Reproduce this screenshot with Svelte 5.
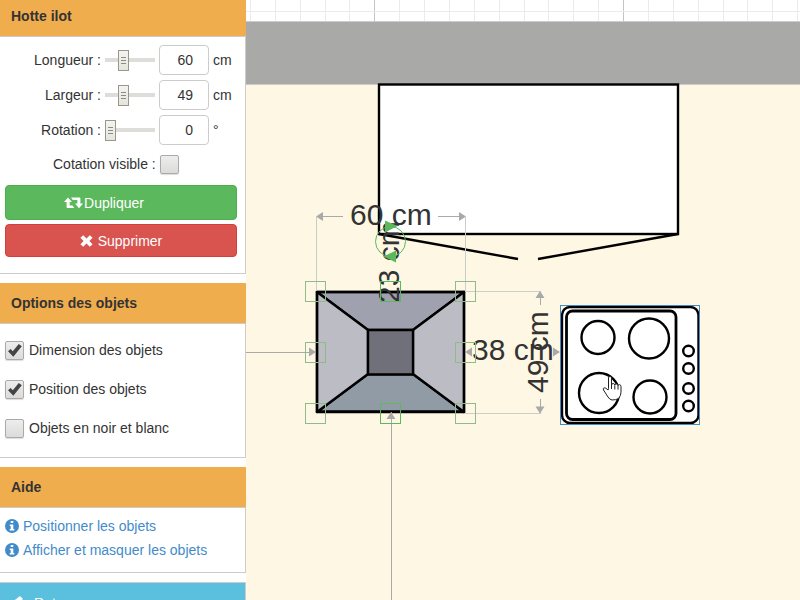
<script lang="ts">
	type Dimension = {
		id: string;
		label: string;
		value: number;
		max: number;
		unit: string;
	};

	type Option = {
		id: string;
		label: string;
		checked: boolean;
	};

	let dimensions = $state<Dimension[]>([
		{ id: 'longueur', label: 'Longueur :', value: 60, max: 180, unit: 'cm' },
		{ id: 'largeur', label: 'Largeur :', value: 49, max: 147, unit: 'cm' },
		{ id: 'rotation', label: 'Rotation :', value: 0, max: 360, unit: '°' }
	]);

	let options = $state<Option[]>([
		{ id: 'dimension', label: 'Dimension des objets', checked: true },
		{ id: 'position', label: 'Position des objets', checked: true },
		{ id: 'noir-blanc', label: 'Objets en noir et blanc', checked: false }
	]);

	let cotation = $state(false);

	const helpLinks = ['Positionner les objets', 'Afficher et masquer les objets'];

	// plan geometry, origin at the top left of the canvas
	const gridLines = Array.from({ length: 120 }, (_, i) => ({
		x: Math.floor(4.4 + i * 24.88) + 0.5,
		major: i % 10 === 5
	}));

	const handles = [
		{ x: 59, y: 281 },
		{ x: 134, y: 281, strong: true },
		{ x: 209, y: 281 },
		{ x: 59, y: 342 },
		{ x: 209, y: 342 },
		{ x: 59, y: 403 },
		{ x: 134, y: 403, strong: true },
		{ x: 209, y: 403 }
	];

	const burners = [
		{ x: 352, y: 337.5, r: 16.5 },
		{ x: 403, y: 338.5, r: 20 },
		{ x: 353, y: 393, r: 20 },
		{ x: 404, y: 397, r: 16.5 }
	];

	const knobs = [351, 368.5, 388.5, 406];
</script>

<div class="planner">
	<aside class="sidebar">
		<section class="panel">
			<h2 class="first">Hotte ilot</h2>
			<div class="body object">
				{#each dimensions as dim (dim.id)}
					<div class="dimension">
						<label for={dim.id}>{dim.label}</label>
						<input type="range" min="0" max={dim.max} bind:value={dim.value} aria-label={dim.label} />
						<input class="number" id={dim.id} type="number" bind:value={dim.value} />
						<span>{dim.unit}</span>
					</div>
				{/each}
				<div class="cotation">
					<label for="cotation">Cotation visible :</label>
					<input id="cotation" type="checkbox" bind:checked={cotation} />
				</div>
				<button class="btn duplicate" type="button">
					<svg width="19" height="14" viewBox="0 0 19 14" aria-hidden="true">
						<path d="M4 1.500 8 6H5.700v3.600H8.500l1.800 2.400H3.600c-.6 0-1-.4-1-1V6H0zM7 1.500h8.400c.6 0 1 .4 1 1V7.500H19l-4 4.800-4-4.800h2.400V4H8.800z" />
					</svg>
					<span>Dupliquer</span>
				</button>
				<button class="btn delete" type="button">
					<svg width="13" height="12" viewBox="0 0 13 12" aria-hidden="true">
						<path d="M3.2.2 6.5 3.4 9.8.2 12.6 2.8 9.4 6l3.2 3.2-2.8 2.6-3.3-3.2-3.3 3.2L.4 9.2 3.6 6 .4 2.8z" />
					</svg>
					<span>Supprimer</span>
				</button>
			</div>
		</section>

		<section class="panel">
			<h2>Options des objets</h2>
			<div class="body options">
				{#each options as option (option.id)}
					<label>
						<input type="checkbox" bind:checked={option.checked} />
						{option.label}
					</label>
				{/each}
			</div>
		</section>

		<section class="panel">
			<h2>Aide</h2>
			<div class="body help">
				{#each helpLinks as text (text)}
					<a href="#aide">
						<svg width="14" height="14" viewBox="0 0 14 14" aria-hidden="true">
							<circle cx="7" cy="7" r="7" fill="#428bca" />
							<path d="M5.7 2h2.6v2H5.7zM4.7 5.4h3.6V10h1v1.6H4.7V10h1V7h-1z" fill="#fff" />
						</svg>
						{text}
					</a>
				{/each}
			</div>
		</section>

		<button class="back" type="button">
			<svg width="14" height="14" viewBox="0 0 14 14" aria-hidden="true">
				<path d="M9 0 12 3 7 7l5 4-3 3-9-7z" />
			</svg>
			Retour
		</button>
	</aside>

	<main class="canvas">
		<svg width="100%" height="100%" role="img" aria-label="Plan">
			<rect width="100%" height="100%" fill="#fff" />
			{#each gridLines as line (line.x)}
				<line x1={line.x} x2={line.x} y1="0" y2="22" stroke={line.major ? '#c4c4c4' : '#ebebeb'} />
			{/each}
			<line x1="0" x2="100%" y1="11.5" y2="11.5" stroke="#ebebeb" />
			<rect y="84" width="100%" height="100%" fill="#fdf7e3" />
			<rect y="21" width="100%" height="64" fill="#ccc" />
			<rect y="22" width="100%" height="62" fill="#a9a9a7" />

			<!-- cupboard with its two doors -->
			<g stroke="#000" stroke-width="2.4">
				<rect x="133" y="84.5" width="299" height="149.5" fill="#fff" />
				<path d="M133 234 272 259M432 234 292 259" fill="none" />
			</g>

			<!-- hob -->
			<g stroke="#000" fill="#fff">
				<rect x="316" y="307" width="136.5" height="116" rx="8" stroke-width="2.4" />
				<rect x="320.5" y="311" width="109.5" height="108.5" rx="6" stroke-width="2.8" />
				{#each burners as b (b.x)}
					<circle cx={b.x} cy={b.y} r={b.r} stroke-width="2.4" />
				{/each}
				{#each knobs as y (y)}
					<circle cx="442.5" cy={y} r="5.3" stroke-width="2.4" />
				{/each}
			</g>
			<rect x="314.5" y="305.5" width="139" height="119" fill="none" stroke="#428bca" />

			<!-- island hood -->
			<g stroke="#000" stroke-width="2.4" stroke-linejoin="round">
				<path d="M71 292H218L167 330H122z" fill="#a0a1ae" />
				<path d="M71 412H218L167 374H122z" fill="#919ba6" />
				<path d="M71 292V412L122 374V330zM218 292V412L167 374V330z" fill="#bcbcc4" />
				<rect x="122" y="330" width="45" height="44.5" fill="#70707a" />
				<rect x="71" y="292" width="147" height="119.5" fill="none" stroke-linejoin="miter" />
			</g>

			<!-- extension lines -->
			<path d="M70.5 217V291M219.5 217V291M219 291.5H295M219 413.5H295" stroke="#ccc" fill="none" />

			<!-- measure lines and arrow heads -->
			<path
				d="M71 216.5H97M192 216.5H219M294.5 292V305M294.5 399V413M0 352.5H70M145.5 412V2000"
				stroke="#a9a9a9"
				fill="none"
			/>
			<path
				d="M70 216.5l7-4.5v9zM220 216.5l-7-4.5v9zM294 291l-4.5 7h9zM294 413.5l-4.5-7h9zM70 352l-7-4.5v9zM219 352l7-4.5v9zM314 352l-7-4.5v9zM145 412l-4.5 7h9z"
				fill="#a9a9a9"
			/>

			<g class="measure">
				<text x="104" y="225">60 cm</text>
				<text x="226" y="360">38 cm</text>
				<text transform="translate(153 303) rotate(-90)">23 cm</text>
				<text transform="translate(302 393) rotate(-90)">49 cm</text>
			</g>

			{#each handles as h (`${h.x}-${h.y}`)}
				<rect
					x={h.x + 0.5}
					y={h.y + 0.5}
					width="20"
					height="20"
					fill="none"
					stroke={h.strong ? '#5cb85c' : '#8fba8a'}
				/>
			{/each}
			<circle cx="144.5" cy="241.5" r="15" fill="none" stroke="#5cb85c" />
			<path d="M139 220.5v12l12.5-6.5zM150 250.500v12l-12.5-6z" fill="#5cb85c" />

			<!-- hand pointer over the hob -->
			<path
				d="M362.5 388.5V378q0-1.600 1.500-1.600t1.500 1.600v7q.2-1.500 1.700-1.500t1.600 1.700q.2-1.200 1.600-1.200t1.600 1.700q.3-1 1.500-1 1.500 0 1.500 2v5.500q0 3.500-2.500 6.300-2.500 1.500-6.500 1.500-2.500-.5-4-3l-4.500-7q-.8-1.700.6-2.200 1.500-.3 4 2.200z"
				fill="#fff"
				stroke="#222"
			/>
			<path d="M365.5 385v4M368.800 385.5v4M372 386v3.500" stroke="#222" />
		</svg>
	</main>
</div>

<style>
	:global(body) {
		margin: 0;
	}
	.planner {
		display: flex;
		height: 100vh;
		overflow: hidden;
		font-family: 'Liberation Sans', Arial, sans-serif;
		font-size: 14px;
		line-height: 20px;
		color: #333;
		background: #fff;
	}
	.sidebar {
		width: 246px;
		flex: none;
	}
	.canvas {
		flex: 1;
		min-width: 0;
	}
	.canvas svg {
		display: block;
	}
	.panel {
		margin-bottom: 9px;
	}
	h2 {
		margin: 0;
		padding: 10px 11px;
		font-size: 14px;
		line-height: 20px;
		font-weight: bold;
		background: #f0ad4e;
	}
	h2.first {
		padding-top: 6px;
	}
	.body {
		border: 1px solid #ccc;
		border-left: 0;
		background: #fff;
	}
	.object {
		padding: 8px 8px 16px 5px;
	}
	.dimension {
		display: grid;
		grid-template-columns: 96px 50px 50px auto;
		column-gap: 4px;
		align-items: center;
		margin-bottom: 5px;
	}
	.dimension label {
		text-align: right;
	}
	.number {
		box-sizing: border-box;
		width: 50px;
		height: 30px;
		padding: 0 15px 0 4px;
		border: 1px solid #ccc;
		border-radius: 4px;
		font: inherit;
		color: inherit;
		text-align: right;
		background: #fff;
		appearance: textfield;
	}
	.number::-webkit-inner-spin-button {
		appearance: none;
		margin: 0;
	}
	input[type='range'] {
		appearance: none;
		width: 50px;
		height: 21px;
		margin: 0;
		background: linear-gradient(#deddda, #deddda) center / 100% 4px no-repeat;
	}
	input[type='range']::-webkit-slider-thumb {
		appearance: none;
		box-sizing: border-box;
		width: 11px;
		height: 21px;
		border: 1px solid #97978b;
		background:
			repeating-linear-gradient(#8b8b85 0 1px, transparent 1px 3px) center / 5px 7px no-repeat,
			linear-gradient(#f4f3f0, #e6e5dc);
	}
	input[type='checkbox'] {
		appearance: none;
		box-sizing: border-box;
		width: 19px;
		height: 19px;
		margin: 0;
		flex: none;
		border: 1px solid #aaa;
		border-radius: 2px;
		background: linear-gradient(#ededed, #dcdbda);
		box-shadow: 0 1px 1px #ddd;
	}
	input[type='checkbox']:checked::before {
		content: '';
		display: block;
		width: 17px;
		height: 17px;
		background: #444;
		clip-path: polygon(12% 57%, 27% 44%, 40% 57%, 75% 14%, 93% 28%, 43% 90%);
	}
	.cotation {
		display: flex;
		align-items: center;
		gap: 4px;
		padding: 4px 0 11px 48px;
	}
	.btn {
		display: flex;
		align-items: center;
		justify-content: center;
		gap: 5px;
		width: 100%;
		height: 33px;
		padding: 0;
		border: 1px solid #d43f3a;
		border-radius: 4px;
		font: inherit;
		color: #fff;
		background: #d9534f;
	}
	.duplicate {
		height: 35px;
		gap: 1px;
		margin-bottom: 4px;
		padding-right: 34px;
		border-color: #4cae4c;
		background: #5cb85c;
	}
	.btn svg,
	.back svg {
		fill: #fff;
	}
	.options {
		display: flex;
		flex-direction: column;
		gap: 19px;
		padding: 16px 5px 19px;
	}
	.options label {
		display: flex;
		align-items: center;
		gap: 5px;
	}
	.help {
		display: flex;
		flex-direction: column;
		gap: 4px;
		padding: 8px 5px 12px;
	}
	.help a {
		display: flex;
		align-items: center;
		gap: 4px;
		color: #428bca;
		text-decoration: none;
	}
	.back {
		display: flex;
		align-items: center;
		gap: 9px;
		width: 100%;
		height: 42px;
		padding: 0 11px;
		border: 1px solid #ccc;
		border-left: 0;
		font: inherit;
		color: #fff;
		background: #5bc0de;
	}
	.measure {
		font-size: 30px;
		fill: #333;
	}
</style>
